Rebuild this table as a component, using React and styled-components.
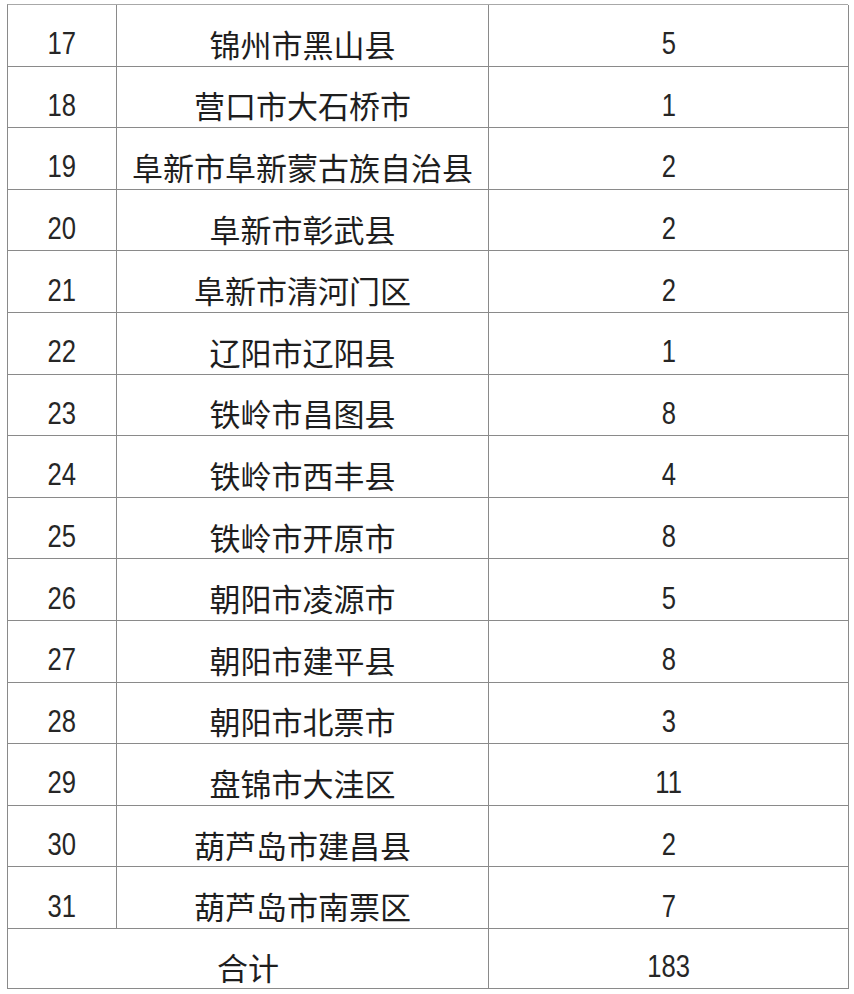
import React from 'react';
import styled, { createGlobalStyle } from 'styled-components';

const GlobalStyle = createGlobalStyle`
  html, body {
    margin: 0;
    padding: 0;
    background: #fff;
  }
`;

const rows = [
  [17, '锦州市黑山县', 5],
  [18, '营口市大石桥市', 1],
  [19, '阜新市阜新蒙古族自治县', 2],
  [20, '阜新市彰武县', 2],
  [21, '阜新市清河门区', 2],
  [22, '辽阳市辽阳县', 1],
  [23, '铁岭市昌图县', 8],
  [24, '铁岭市西丰县', 4],
  [25, '铁岭市开原市', 8],
  [26, '朝阳市凌源市', 5],
  [27, '朝阳市建平县', 8],
  [28, '朝阳市北票市', 3],
  [29, '盘锦市大洼区', 11],
  [30, '葫芦岛市建昌县', 2],
  [31, '葫芦岛市南票区', 7],
];

const Page = styled.div`
  padding: 4px 0 0 7px;
`;

const Table = styled.div`
  display: grid;
  grid-template-columns: 109px 372px 360px;
  grid-template-rows: repeat(15, 61.6px) 60px;
  width: 841px;
  box-sizing: border-box;
  border-top: 1.5px solid #a8a8a8;
  border-left: 1.5px solid #8a8a8a;
`;

const Cell = styled.div`
  grid-column: ${(p) => p.$span || 'auto'};
  display: flex;
  align-items: center;
  justify-content: center;
  box-sizing: border-box;
  padding-top: 16px;
  border-right: 1.5px solid #8a8a8a;
  border-bottom: 1.5px solid #8a8a8a;
  color: #1e1e1e;
  font-family: "Noto Sans CJK SC", "Noto Sans", sans-serif;
  font-size: 31px;
  line-height: 1;
`;

// digits in the source are a narrow grotesque, squeeze Arial-metric glyphs
const Num = styled.span`
  display: inline-block;
  font-family: "Liberation Sans", Arial, sans-serif;
  font-size: 32px;
  color: #262626;
  transform: scaleX(0.8);
`;

export default function App() {
  return (
    <Page>
      <GlobalStyle />
      <Table>
        {rows.map(([no, name, count]) => (
          <React.Fragment key={no}>
            <Cell><Num>{no}</Num></Cell>
            <Cell>{name}</Cell>
            <Cell><Num>{count}</Num></Cell>
          </React.Fragment>
        ))}
        <Cell $span="1 / 3">合计</Cell>
        <Cell><Num>183</Num></Cell>
      </Table>
    </Page>
  );
}
